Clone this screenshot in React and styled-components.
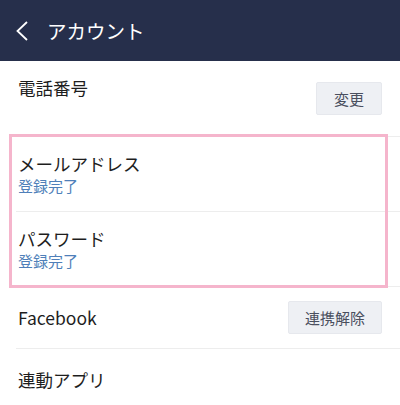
import React from "react";
import styled, { createGlobalStyle } from "styled-components";

const Global = createGlobalStyle`
  html, body { margin: 0; padding: 0; background: #fff; }
  body { font-family: "Noto Sans CJK JP", "Noto Sans", sans-serif; }
  * { box-sizing: border-box; }
`;

const Page = styled.div`
  width: 400px;
  height: 405px;
  overflow: hidden;
  background: #fff;
`;

const Header = styled.header`
  height: 61px;
  background: #262f4b;
  display: flex;
  align-items: center;
  padding-left: 15px;
  gap: 18px;
  color: #fff;
`;

const BackIcon = styled.svg`
  width: 14px;
  height: 22px;
  flex: none;
`;

const Title = styled.h1`
  margin: 0;
  font-size: 19.5px;
  font-weight: 400;
  line-height: 1;
  margin-top: 1px;
`;

const List = styled.div`
  display: flex;
  flex-direction: column;
`;

const Row = styled.div`
  margin-left: 16px;
  padding: 0 18px 0 2px;
  height: ${(p) => p.$h}px;
  border-bottom: 1px solid #ededed;
  display: flex;
  align-items: center;
  justify-content: space-between;
`;

const Texts = styled.div`
  display: flex;
  flex-direction: column;
  align-self: ${(p) => (p.$top ? "flex-start" : "auto")};
  padding-top: ${(p) => (p.$top ? "15px" : "0")};
`;

const Label = styled.div`
  font-size: 17.5px;
  line-height: 23px;
  color: #1e1e1e;
`;

const Sub = styled.div`
  font-size: 15px;
  line-height: 22px;
  color: #4f7fb9;
`;

const Action = styled.button`
  font-family: inherit;
  font-size: 15px;
  color: #4a4f5e;
  background: #eef0f4;
  border: 1px solid #e6e8ed;
  border-radius: 2px;
  height: 33px;
  padding: 0 ${(p) => p.$pad}px;
  line-height: 1;
`;

const Highlight = styled.div`
  position: relative;
`;

const Frame = styled.div`
  position: absolute;
  top: -3px;
  left: 9px;
  right: 12px;
  bottom: -1px;
  border: 3px solid #f5b5cc;
  pointer-events: none;
`;

export default function App() {
  return (
    <Page>
      <Global />
      <Header>
        <BackIcon viewBox="0 0 14 22">
          <polyline points="12,2 2.5,11 12,20" fill="none" stroke="#fff" strokeWidth="1.8" />
        </BackIcon>
        <Title>アカウント</Title>
      </Header>
      <List>
        <Row $h={76}>
          <Texts $top>
            <Label>電話番号</Label>
          </Texts>
          <Action $pad={17}>変更</Action>
        </Row>
        <Highlight>
          <Row $h={75}>
            <Texts>
              <Label>メールアドレス</Label>
              <Sub>登録完了</Sub>
            </Texts>
          </Row>
          <Row $h={75}>
            <Texts>
              <Label>パスワード</Label>
              <Sub>登録完了</Sub>
            </Texts>
          </Row>
          <Frame />
        </Highlight>
        <Row $h={62}>
          <Label>Facebook</Label>
          <Action $pad={16}>連携解除</Action>
        </Row>
        <Row $h={62}>
          <Label>連動アプリ</Label>
        </Row>
      </List>
    </Page>
  );
}
